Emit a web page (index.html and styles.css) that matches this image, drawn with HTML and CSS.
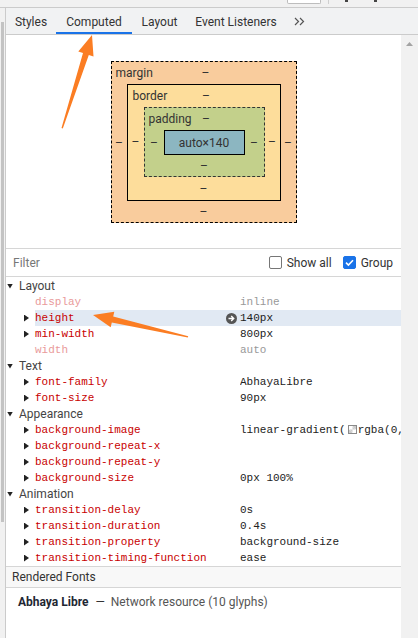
FILE: index.html
```html
<!DOCTYPE html>
<html>
<head>
<meta charset="utf-8">
<link rel="stylesheet" href="styles.css">
</head>
<body>
<div class="top-strip">
  <span class="ts-input"></span>
  <span class="ts-div"></span>
  <span class="ts-dot ts-dot1"></span>
  <span class="ts-dot ts-dot2"></span>
</div>
<div class="main">
  <div class="side-strip"><div class="side-thumb"></div></div>
  <div class="panel">
    <div class="tabbar">
      <div class="tab tab-styles">Styles</div>
      <div class="tab tab-computed active">Computed</div>
      <div class="tab tab-layout">Layout</div>
      <div class="tab tab-events">Event Listeners</div>
      <div class="tab tab-more">
        <svg width="11" height="9" viewBox="0 0 11 9"><path d="M1 1l3.5 3.5L1 8M6 1l3.5 3.5L6 8" fill="none" stroke="#555" stroke-width="1.2"/></svg>
      </div>
    </div>
    <div class="body">
      <div class="content">
        <div class="boxmodel">
          <div class="bm bm-margin">
            <div class="bm-top"><span class="bm-label">margin</span><span class="bm-v">–</span><span></span></div>
            <div class="bm-side">–</div>
            <div class="bm bm-border">
              <div class="bm-top"><span class="bm-label">border</span><span class="bm-v">–</span><span></span></div>
              <div class="bm-side">–</div>
              <div class="bm bm-padding">
                <div class="bm-top"><span class="bm-label">padding</span><span class="bm-v">–</span><span></span></div>
                <div class="bm-side">–</div>
                <div class="bm-content">auto×140</div>
                <div class="bm-side">–</div>
                <div class="bm-bottom">–</div>
              </div>
              <div class="bm-side">–</div>
              <div class="bm-bottom">–</div>
            </div>
            <div class="bm-side">–</div>
            <div class="bm-bottom">–</div>
          </div>
        </div>

        <div class="filter">
          <span class="filter-ph">Filter</span>
          <span class="cb"></span><span class="cb-label">Show all</span>
          <span class="cb checked"><svg width="13" height="13" viewBox="0 0 13 13"><path d="M3 6.6l2.4 2.4L10 4.2" fill="none" stroke="#fff" stroke-width="1.6"/></svg></span><span class="cb-label last">Group</span>
        </div>

        <div class="list">
          <div class="group"><span class="tri-down"></span><span class="gname">Layout</span></div>
          <div class="prop inactive"><span class="tri-right hidden"></span><div class="pmain"><span class="pname">display</span><span class="pval">inline</span></div></div>
          <div class="prop"><span class="tri-right"></span><div class="pmain hl"><span class="pname">height<svg class="goto" width="11" height="11" viewBox="0 0 11 11"><circle cx="5.5" cy="5.5" r="5.5" fill="#555"/><path d="M2.5 5.5h5M5.2 3l2.5 2.5L5.2 8" fill="none" stroke="#fff" stroke-width="1.4"/></svg></span><span class="pval">140px</span></div></div>
          <div class="prop"><span class="tri-right"></span><div class="pmain"><span class="pname">min-width</span><span class="pval">800px</span></div></div>
          <div class="prop inactive"><span class="tri-right hidden"></span><div class="pmain"><span class="pname">width</span><span class="pval">auto</span></div></div>
          <div class="group"><span class="tri-down"></span><span class="gname">Text</span></div>
          <div class="prop"><span class="tri-right"></span><div class="pmain"><span class="pname">font-family</span><span class="pval">AbhayaLibre</span></div></div>
          <div class="prop"><span class="tri-right"></span><div class="pmain"><span class="pname">font-size</span><span class="pval">90px</span></div></div>
          <div class="group"><span class="tri-down"></span><span class="gname">Appearance</span></div>
          <div class="prop"><span class="tri-right"></span><div class="pmain"><span class="pname">background-image</span><span class="pval">linear-gradient(<span class="swatch"></span>rgba(0,</span></div></div>
          <div class="prop"><span class="tri-right"></span><div class="pmain"><span class="pname">background-repeat-x</span><span class="pval"></span></div></div>
          <div class="prop"><span class="tri-right"></span><div class="pmain"><span class="pname">background-repeat-y</span><span class="pval"></span></div></div>
          <div class="prop"><span class="tri-right"></span><div class="pmain"><span class="pname">background-size</span><span class="pval">0px 100%</span></div></div>
          <div class="group"><span class="tri-down"></span><span class="gname">Animation</span></div>
          <div class="prop"><span class="tri-right"></span><div class="pmain"><span class="pname">transition-delay</span><span class="pval">0s</span></div></div>
          <div class="prop"><span class="tri-right"></span><div class="pmain"><span class="pname">transition-duration</span><span class="pval">0.4s</span></div></div>
          <div class="prop"><span class="tri-right"></span><div class="pmain"><span class="pname">transition-property</span><span class="pval">background-size</span></div></div>
          <div class="prop"><span class="tri-right"></span><div class="pmain"><span class="pname">transition-timing-function</span><span class="pval">ease</span></div></div>
        </div>

        <div class="rf-header">Rendered Fonts</div>
        <div class="rf-row"><span class="rf-name">Abhaya Libre</span><span class="rf-dash">—</span><span class="rf-src">Network resource (10 glyphs)</span></div>
      </div>
      <div class="scrollbar"><span class="sb-up"></span></div>
    </div>
  </div>
</div>
<svg class="annot" width="418" height="638" viewBox="0 0 418 638">
  <polygon fill="#fb7d23" points="61.5,128 83,53.1 78.3,51.5 92,35 93.5,56.5 88.8,54.9 62.8,128.4"/>
  <polygon fill="#fb7d23" points="188.2,336.2 113.2,316.6 114.3,311.7 93,315 110.7,327.3 111.8,322.4 187.8,337.6"/>
</svg>
</body>
</html>
```
FILE: styles.css
```css
* { box-sizing: border-box; }
html, body { margin: 0; padding: 0; }
body {
  width: 418px;
  height: 638px;
  overflow: hidden;
  position: relative;
  background: #fff;
  font-family: Roboto, "Noto Sans", sans-serif;
  font-size: 12px;
  color: #333;
}

.top-strip {
  height: 8px;
  background: #f1f1f1;
  border-bottom: 1px solid #cbcbcb;
  display: flex;
  align-items: flex-start;
}
.ts-input {
  margin-left: 287px;
  width: 34px;
  height: 4px;
  border: 1px solid #bdbdbd;
  border-top: none;
  border-radius: 0 0 2px 2px;
  background: #fff;
}
.ts-div { margin-left: 7px; width: 1px; height: 4px; background: #cfcfcf; }
.ts-dot { width: 3px; height: 2px; background: #444; }
.ts-dot1 { margin-left: 16px; }
.ts-dot2 { margin-left: 26px; }

.main { display: flex; height: 630px; }
.side-strip {
  width: 6px;
  background: #f1f1f1;
  border-right: 1px solid #cbcbcb;
  padding: 14px 0 0 1px;
}
.side-thumb { width: 3px; height: 500px; background: #c3c3c3; }

.panel { flex: 1; display: flex; flex-direction: column; min-width: 0; }
.tabbar {
  height: 27px;
  background: #f1f2f3;
  border-bottom: 1px solid #cbcbcb;
  display: flex;
}
.tab {
  display: flex;
  align-items: center;
  justify-content: center;
  color: #333;
  padding-top: 1px;
}
.tab-styles { width: 50px; }
.tab-computed { width: 76px; }
.tab-layout { width: 55px; }
.tab-events { width: 98px; }
.tab-more { width: 28px; padding-top: 0; }
.tab.active { box-shadow: inset 0 -2px 0 #1a73e8; }

.body { flex: 1; display: flex; min-height: 0; }
.content { flex: 1; display: flex; flex-direction: column; min-width: 0; }
.scrollbar {
  width: 17px;
  background: #f1f1f1;
  display: flex;
  justify-content: center;
  padding-top: 7px;
}
.sb-up {
  width: 7px;
  height: 4px;
  background: #a3a3a3;
  clip-path: polygon(50% 0, 100% 100%, 0 100%);
}

/* box model */
.boxmodel {
  height: 213px;
  display: flex;
  justify-content: center;
  align-items: flex-start;
  padding-top: 26px;
}
.bm {
  display: grid;
  color: #333;
}
.bm-margin {
  width: 186px; height: 162px;
  border: 1px dashed #000;
  background: #f9cc9d;
  grid-template-columns: 15px 154px 15px;
  grid-template-rows: 22px 117px 21px;
}
.bm-border {
  width: 154px; height: 117px;
  border: 1px solid #000;
  background: #fddd9b;
  grid-template-columns: 16px 121px 15px;
  grid-template-rows: 22px 70px 23px;
}
.bm-padding {
  width: 121px; height: 70px;
  border: 1px dashed #333;
  background: #c3d08b;
  grid-template-columns: 19px 81px 19px;
  grid-template-rows: 22px 25px 21px;
}
.bm-top {
  grid-column: 1 / -1;
  display: grid;
  grid-template-columns: 1fr auto 1fr;
  align-items: center;
  padding-left: 4px;
}
.bm-border > .bm-top { padding-left: 5px; }
.bm-label { justify-self: start; }
.bm-side, .bm-bottom {
  display: flex;
  align-items: center;
  justify-content: center;
}
.bm-bottom { grid-column: 1 / -1; }
.bm-content {
  width: 81px; height: 25px;
  border: 1px solid #000;
  background: #8cb6c1;
  display: flex;
  align-items: center;
  justify-content: center;
  color: #333;
}

/* filter */
.filter {
  height: 29px;
  border-top: 1px solid #d6d6d6;
  border-bottom: 1px solid #d6d6d6;
  display: flex;
  align-items: center;
  padding: 0 7px;
}
.filter-ph { color: #777; flex: 1; }
.cb {
  width: 13px; height: 13px;
  border: 1px solid #767676;
  border-radius: 2px;
  background: #fff;
  margin-right: 5px;
  display: flex;
}
.cb.checked { background: #1a73e8; border-color: #1a73e8; }
.cb.checked svg { margin: -1px; }
.cb-label { margin-right: 11px; color: #333; }
.cb-label.last { margin-right: 1px; }

/* list */
.list { display: flex; flex-direction: column; padding-top: 1px; }
.group {
  height: 16px;
  display: flex;
  align-items: center;
  padding-left: 1px;
}
.tri-down {
  width: 6px; height: 5px;
  background: #222;
  clip-path: polygon(0 0, 100% 0, 50% 100%);
  margin-right: 6px;
}
.gname { color: #444; }
.prop {
  height: 16px;
  display: flex;
  align-items: center;
  padding-left: 18px;
  font-family: "Liberation Mono", "DejaVu Sans Mono", monospace;
  font-size: 11px;
}
.tri-right {
  width: 5px; height: 7px;
  background: #222;
  clip-path: polygon(0 0, 100% 50%, 0 100%);
  flex: none;
}
.tri-right.hidden { visibility: hidden; }
.pmain {
  flex: 1;
  min-width: 0;
  height: 16px;
  margin-left: 6px;
  display: flex;
  align-items: center;
}
.pmain.hl { background: #e1e9f3; }
.pname {
  width: 205px;
  flex: none;
  color: #c80000;
  display: flex;
  align-items: center;
  justify-content: space-between;
}
.goto { margin-right: 3px; }
.pval {
  flex: 1;
  min-width: 0;
  white-space: nowrap;
  overflow: hidden;
  color: #222;
}
.prop.inactive .pname { color: #e99a9a; }
.prop.inactive .pval { color: #999; }
.swatch {
  display: inline-block;
  width: 9px; height: 9px;
  margin: 0 1px 0 2px;
  vertical-align: -1px;
  border: 1px solid #8a8a8a;
  background:
    linear-gradient(45deg, #ccc 25%, transparent 25%, transparent 75%, #ccc 75%),
    linear-gradient(45deg, #ccc 25%, #fff 25%, #fff 75%, #ccc 75%);
  background-size: 7px 7px;
  background-position: 0 0, 3.5px 3.5px;
}

/* rendered fonts */
.rf-header {
  height: 22px;
  border-top: 1px solid #d6d6d6;
  border-bottom: 1px solid #d6d6d6;
  background: #f8f8f8;
  display: flex;
  align-items: center;
  padding-left: 6px;
  color: #333;
}
.rf-row {
  display: flex;
  align-items: center;
  height: 16px;
  margin-top: 6px;
  padding-left: 12px;
}
.rf-name { font-weight: bold; color: #1e2733; }
.rf-dash { margin: 0 6px 0 7px; color: #333; }
.rf-src { color: #555; }

.annot {
  position: absolute;
  left: 0;
  top: 0;
  pointer-events: none;
}
```
